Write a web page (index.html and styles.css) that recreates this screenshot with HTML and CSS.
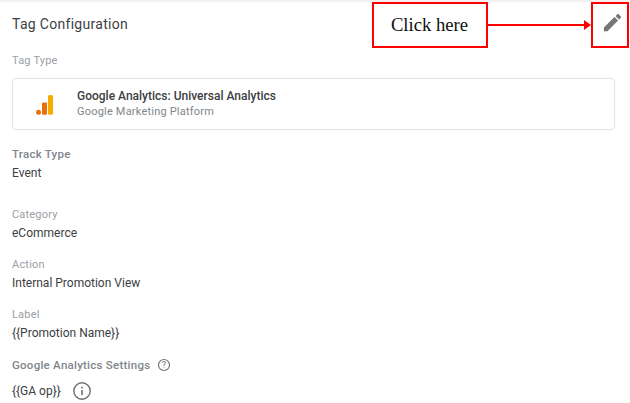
FILE: index.html
```html
<!doctype html>
<html lang="en">
  <head>
    <meta charset="UTF-8" />
    <meta name="viewport" content="width=device-width, initial-scale=1.0" />
    <title>Tag Configuration</title>
    <link rel="stylesheet" href="styles.css">
  </head>
  <body>
    <div class="panel">
      <h2 class="panel-title">Tag Configuration</h2>

      <div class="label tag-type-label">Tag Type</div>
      <div class="tag-card">
        <svg class="ga-logo" width="17" height="20" viewBox="0 0 17 20">
          <circle cx="2.5" cy="17.3" r="2.5" fill="#e8710a" />
          <rect x="6" y="7.5" width="5" height="12.3" rx="1.2" fill="#e8710a" />
          <rect x="12" y="0" width="5" height="19.8" rx="1.6" fill="#f9ab00" />
        </svg>
        <div>
          <div class="tag-name">Google Analytics: Universal Analytics</div>
          <div class="tag-vendor">Google Marketing Platform</div>
        </div>
      </div>

      <div class="field track-type">
        <div class="label label-strong">Track Type</div>
        <div class="value">Event</div>
      </div>

      <div class="field category">
        <div class="label">Category</div>
        <div class="value">eCommerce</div>
      </div>

      <div class="field">
        <div class="label">Action</div>
        <div class="value">Internal Promotion View</div>
      </div>

      <div class="field">
        <div class="label">Label</div>
        <div class="value">{{Promotion Name}}</div>
      </div>

      <div class="settings-label">
        <span class="label label-strong">Google Analytics Settings</span>
        <svg width="14" height="14" viewBox="0 0 14 14">
          <circle cx="7" cy="7" r="5.5" fill="none" stroke="#757575" stroke-width="1.2" />
          <text x="7" y="10" text-anchor="middle" class="help-mark">?</text>
        </svg>
      </div>
      <div class="settings-value">
        <span class="value">{{GA op}}</span>
        <svg width="20" height="20" viewBox="0 0 20 20">
          <circle cx="10" cy="10" r="8.2" fill="none" stroke="#6b6f73" stroke-width="1.4" />
          <rect x="9.2" y="9" width="1.6" height="5.2" fill="#6b6f73" />
          <rect x="9.2" y="5.8" width="1.6" height="1.7" fill="#6b6f73" />
        </svg>
      </div>
    </div>

    <div class="callout">Click here</div>
    <div class="arrow"></div>
    <div class="edit-box">
      <svg width="23" height="23" viewBox="0 0 24 24">
        <path fill="#757575" d="M3 17.25V21h3.75L17.81 9.94l-3.75-3.75L3 17.25zM20.71 7.04a1 1 0 0 0 0-1.41l-2.34-2.34a1 1 0 0 0-1.41 0l-1.83 1.83 3.75 3.75 1.83-1.83z" />
      </svg>
    </div>
  </body>
</html>
```

FILE: styles.css
```css
body {
  margin: 0;
  background: #fff;
  font-family: Roboto, "Liberation Sans", sans-serif;
  font-size: 12px;
  color: #3c4043;
  overflow: hidden;
}

.panel {
  border-top: 2px solid #f1f1f1;
  padding: 13px 15px 0 12px;
}

.panel-title {
  margin: 0;
  font-size: 14px;
  font-weight: 400;
  line-height: 18px;
  color: #3c4043;
  letter-spacing: 0.3px;
}

.label {
  font-size: 11px;
  line-height: 14px;
  color: #9aa0a6;
  letter-spacing: 0.2px;
}

.label-strong {
  font-size: 11.5px;
  font-weight: 500;
  color: #80868b;
  letter-spacing: 0.25px;
}

.tag-type-label {
  margin-top: 21px;
}

.tag-card {
  display: flex;
  align-items: center;
  gap: 24px;
  height: 50px;
  margin-top: 10px;
  padding-left: 23px;
  border: 1px solid #e3e3e3;
  border-radius: 4px;
}

.ga-logo {
  flex: none;
  margin-top: 1px;
}

.tag-name {
  font-size: 12px;
  font-weight: 500;
  line-height: 15px;
  color: #3c4043;
}

.tag-vendor {
  font-size: 11px;
  line-height: 15px;
  color: #80868b;
  letter-spacing: 0.2px;
}

.field {
  margin-top: 18px;
}

.track-type {
  margin-top: 17px;
}

.track-type .value {
  margin-top: 5px;
}

.category {
  margin-top: 28px;
}

.value {
  margin-top: 4px;
  font-size: 12px;
  line-height: 14px;
  color: #3c4043;
}

.settings-label {
  display: flex;
  align-items: center;
  gap: 7px;
  margin-top: 18px;
}

.help-mark {
  font-size: 9px;
  fill: #757575;
}

.settings-value {
  display: flex;
  align-items: center;
  gap: 11px;
  margin-top: 9px;
}

.settings-value .value {
  margin-top: 0;
}

/* annotation drawn over the screenshot */
.callout {
  position: absolute;
  left: 372px;
  top: 2px;
  width: 116px;
  height: 46px;
  box-sizing: border-box;
  border: 2px solid #f00;
  padding-right: 1px;
  background: #fff;
  font-family: "Liberation Serif", serif;
  font-size: 18.67px;
  line-height: 41px;
  text-align: center;
  color: #111;
}

.arrow {
  position: absolute;
  left: 488px;
  top: 24px;
  width: 96px;
  height: 2px;
  background: #f00;
}

.arrow::after {
  content: "";
  position: absolute;
  right: -7px;
  top: -4px;
  border-left: 7px solid #f00;
  border-top: 5px solid transparent;
  border-bottom: 5px solid transparent;
}

.edit-box {
  position: absolute;
  left: 591px;
  top: 2px;
  width: 38px;
  height: 46px;
  box-sizing: border-box;
  border: 2px solid #f00;
  display: flex;
  align-items: center;
  justify-content: center;
  padding: 0 0 6px 5px;
}
```
